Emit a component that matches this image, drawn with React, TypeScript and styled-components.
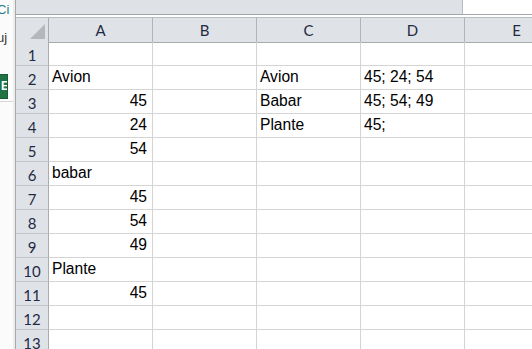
import React from 'react';
import styled, { createGlobalStyle } from 'styled-components';

const GlobalStyle = createGlobalStyle`
  html, body {
    margin: 0;
    padding: 0;
    background: #ffffff;
    overflow: hidden;
  }
`;

const COLS = ['A', 'B', 'C', 'D', 'E'];
const ROW_COUNT = 13;

type Cell = { text: string; align?: 'left' | 'right' };

const data: Record<string, Cell> = {
  A2: { text: 'Avion' },
  A3: { text: '45', align: 'right' },
  A4: { text: '24', align: 'right' },
  A5: { text: '54', align: 'right' },
  A6: { text: 'babar' },
  A7: { text: '45', align: 'right' },
  A8: { text: '54', align: 'right' },
  A9: { text: '49', align: 'right' },
  A10: { text: 'Plante' },
  A11: { text: '45', align: 'right' },
  C2: { text: 'Avion' },
  C3: { text: 'Babar' },
  C4: { text: 'Plante' },
  D2: { text: '45; 24; 54' },
  D3: { text: '45; 54; 49' },
  D4: { text: '45;' },
};

const Window = styled.div`
  display: flex;
  width: 532px;
  height: 349px;
  overflow: hidden;
`;

const SideStrip = styled.div`
  width: 13px;
  flex-shrink: 0;
  background: #fbfbfb;
  border-right: 2px solid #ededed;
  display: flex;
  flex-direction: column;
  overflow: hidden;
  font-family: 'Liberation Sans', Arial, sans-serif;
  font-size: 13px;
`;

const Clipped = styled.div<{ $top: number; $color: string }>`
  flex-shrink: 0;
  margin-top: ${p => p.$top}px;
  margin-left: -3px;
  color: ${p => p.$color};
  white-space: nowrap;
  line-height: 14px;
`;

const ExcelBadge = styled.div`
  flex-shrink: 0;
  margin-top: 29px;
  width: 7px;
  height: 23px;
  background: #1f7244;
  border: 1px solid #185c37;
  border-left: none;
  color: #ffffff;
  font-weight: bold;
  font-size: 12px;
  line-height: 23px;
  overflow: hidden;
  text-indent: 1px;
`;

const StripRule = styled.div`
  flex-shrink: 0;
  margin-top: 2px;
  height: 1px;
  background: #d6d6d6;
`;

const Divider = styled.div`
  width: 1px;
  flex-shrink: 0;
  background: #a8a8a8;
`;

const Sheet = styled.div`
  flex: 1;
  display: flex;
  flex-direction: column;
  min-width: 0;
  overflow: hidden;
`;

const FormulaArea = styled.div`
  flex-shrink: 0;
  height: 14px;
  display: flex;
  background: #dee1e6;
  border-bottom: 1px solid #a3a6aa;
`;

const FormulaSpacer = styled.div`
  flex: 1;
`;

const FormulaInput = styled.div`
  width: 69px;
  background: #ffffff;
  border-left: 1px solid #b9bcc0;
`;

const Gap = styled.div`
  flex-shrink: 0;
  height: 2px;
  background: #ffffff;
  border-bottom: 1px solid #b8bbbf;
`;

const Grid = styled.div`
  flex-shrink: 0;
  display: grid;
  grid-template-columns: 33px repeat(5, 104px);
  grid-auto-rows: 24px;
  font-family: 'Liberation Sans', Arial, sans-serif;
`;

const CornerCell = styled.div`
  height: 25px;
  box-sizing: border-box;
  background: #dfe3e8;
  border-right: 1px solid #ababab;
  border-bottom: 1px solid #ababab;
  display: flex;
  align-items: flex-end;
  justify-content: flex-end;
  padding: 0 3px 3px 0;
`;

const ColHeader = styled.div`
  height: 25px;
  box-sizing: border-box;
  background: #dfe3e8;
  border-right: 1px solid #b1b3b6;
  border-bottom: 1px solid #ababab;
  display: flex;
  align-items: center;
  justify-content: center;
  font-family: Lato, 'Open Sans', sans-serif;
  font-size: 15px;
  color: #1f2a44;
`;

const RowHeader = styled.div`
  box-sizing: border-box;
  background: #dfe3e8;
  border-right: 1px solid #ababab;
  border-bottom: 1px solid #c4c6c9;
  display: flex;
  align-items: center;
  justify-content: center;
  font-family: Lato, 'Open Sans', sans-serif;
  font-size: 15px;
  color: #1f2a44;
  padding-top: 2px;
`;

const DataCell = styled.div<{ $align: 'left' | 'right' }>`
  box-sizing: border-box;
  border-right: 1px solid #d4d4d4;
  border-bottom: 1px solid #d4d4d4;
  display: flex;
  align-items: flex-end;
  justify-content: ${p => (p.$align === 'right' ? 'flex-end' : 'flex-start')};
  padding: 0 5px 4px 3px;
  font-size: 15.6px;
  line-height: 16px;
  color: #000000;
  white-space: nowrap;
  overflow: visible;
`;

const Corner = () => (
  <svg width="15" height="15" viewBox="0 0 15 15">
    <polygon points="15,0 15,15 0,15" fill="#b4b7bb" />
  </svg>
);

export default function App() {
  const rows = Array.from({ length: ROW_COUNT }, (_, i) => i + 1);
  return (
    <>
      <GlobalStyle />
      <Window>
        <SideStrip>
          <Clipped $top={3} $color="#2a7a8c">Ci</Clipped>
          <Clipped $top={14} $color="#333333">uj</Clipped>
          <ExcelBadge>E</ExcelBadge>
          <StripRule />
        </SideStrip>
        <Divider />
        <Sheet>
          <FormulaArea>
            <FormulaSpacer />
            <FormulaInput />
          </FormulaArea>
          <Gap />
          <Grid>
            <CornerCell>
              <Corner />
            </CornerCell>
            {COLS.map(c => (
              <ColHeader key={c}>{c}</ColHeader>
            ))}
            {rows.map(r => (
              <React.Fragment key={r}>
                <RowHeader>{r}</RowHeader>
                {COLS.map(c => {
                  const cell = data[`${c}${r}`];
                  return (
                    <DataCell key={c} $align={cell?.align ?? 'left'}>
                      {cell?.text ?? ''}
                    </DataCell>
                  );
                })}
              </React.Fragment>
            ))}
          </Grid>
        </Sheet>
      </Window>
    </>
  );
}
